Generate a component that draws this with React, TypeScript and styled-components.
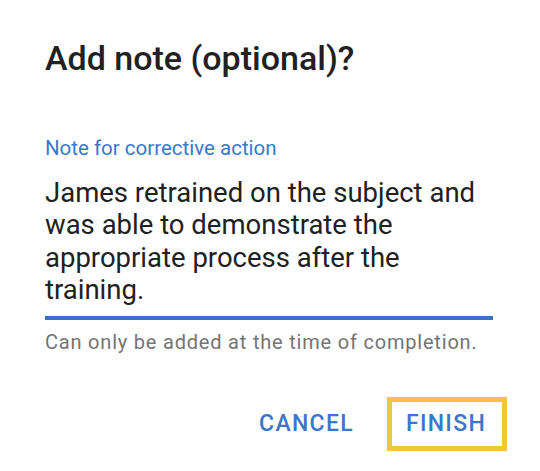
import React from "react";
import styled, { createGlobalStyle } from "styled-components";

const Global = createGlobalStyle`
  html, body { margin: 0; padding: 0; background: #ffffff; }
  body { font-family: Roboto, "Noto Sans", sans-serif; -webkit-font-smoothing: antialiased; }
`;

const Dialog = styled.div`
  width: 540px;
  height: 471px;
  box-sizing: border-box;
  background: #ffffff;
  padding: 38px 47px 0 45px;
  display: flex;
  flex-direction: column;
`;

const Title = styled.h2`
  margin: 0;
  font-size: 34px;
  line-height: 40px;
  font-weight: 500;
  color: #212121;
`;

const Field = styled.div`
  margin-top: 58px;
  display: flex;
  flex-direction: column;
`;

const Label = styled.label`
  font-size: 20.5px;
  line-height: 24px;
  color: #3a78d0;
`;

const Value = styled.div`
  margin-top: 17px;
  font-size: 27.5px;
  line-height: 32.4px;
  color: #212121;
  padding-bottom: 9px;
  border-bottom: 4px solid #3a73c6;
`;

const Helper = styled.div`
  margin-top: 10px;
  font-size: 20px;
  line-height: 24px;
  letter-spacing: 0.8px;
  color: #747474;
`;

const Actions = styled.div`
  margin-top: 43px;
  display: flex;
  justify-content: flex-end;
  align-items: center;
  gap: 12px;
  margin-right: -14px;
`;

const Button = styled.button<{ $focused?: boolean }>`
  font-family: Roboto, "Noto Sans", sans-serif;
  font-size: 23px;
  font-weight: 500;
  letter-spacing: 1.3px;
  color: #3a76cc;
  background: transparent;
  padding: 0 16px 0 14px;
  height: 54px;
  box-sizing: border-box;
  border: 5px solid ${(p) => (p.$focused ? "#f7c144" : "transparent")};
  cursor: pointer;
`;

export default function App() {
  return (
    <>
      <Global />
      <Dialog>
        <Title>Add note (optional)?</Title>
        <Field>
          <Label>Note for corrective action</Label>
          <Value>
            James retrained on the subject and was able to demonstrate the appropriate process after the training.
          </Value>
        </Field>
        <Helper>Can only be added at the time of completion.</Helper>
        <Actions>
          <Button>CANCEL</Button>
          <Button $focused>FINISH</Button>
        </Actions>
      </Dialog>
    </>
  );
}
